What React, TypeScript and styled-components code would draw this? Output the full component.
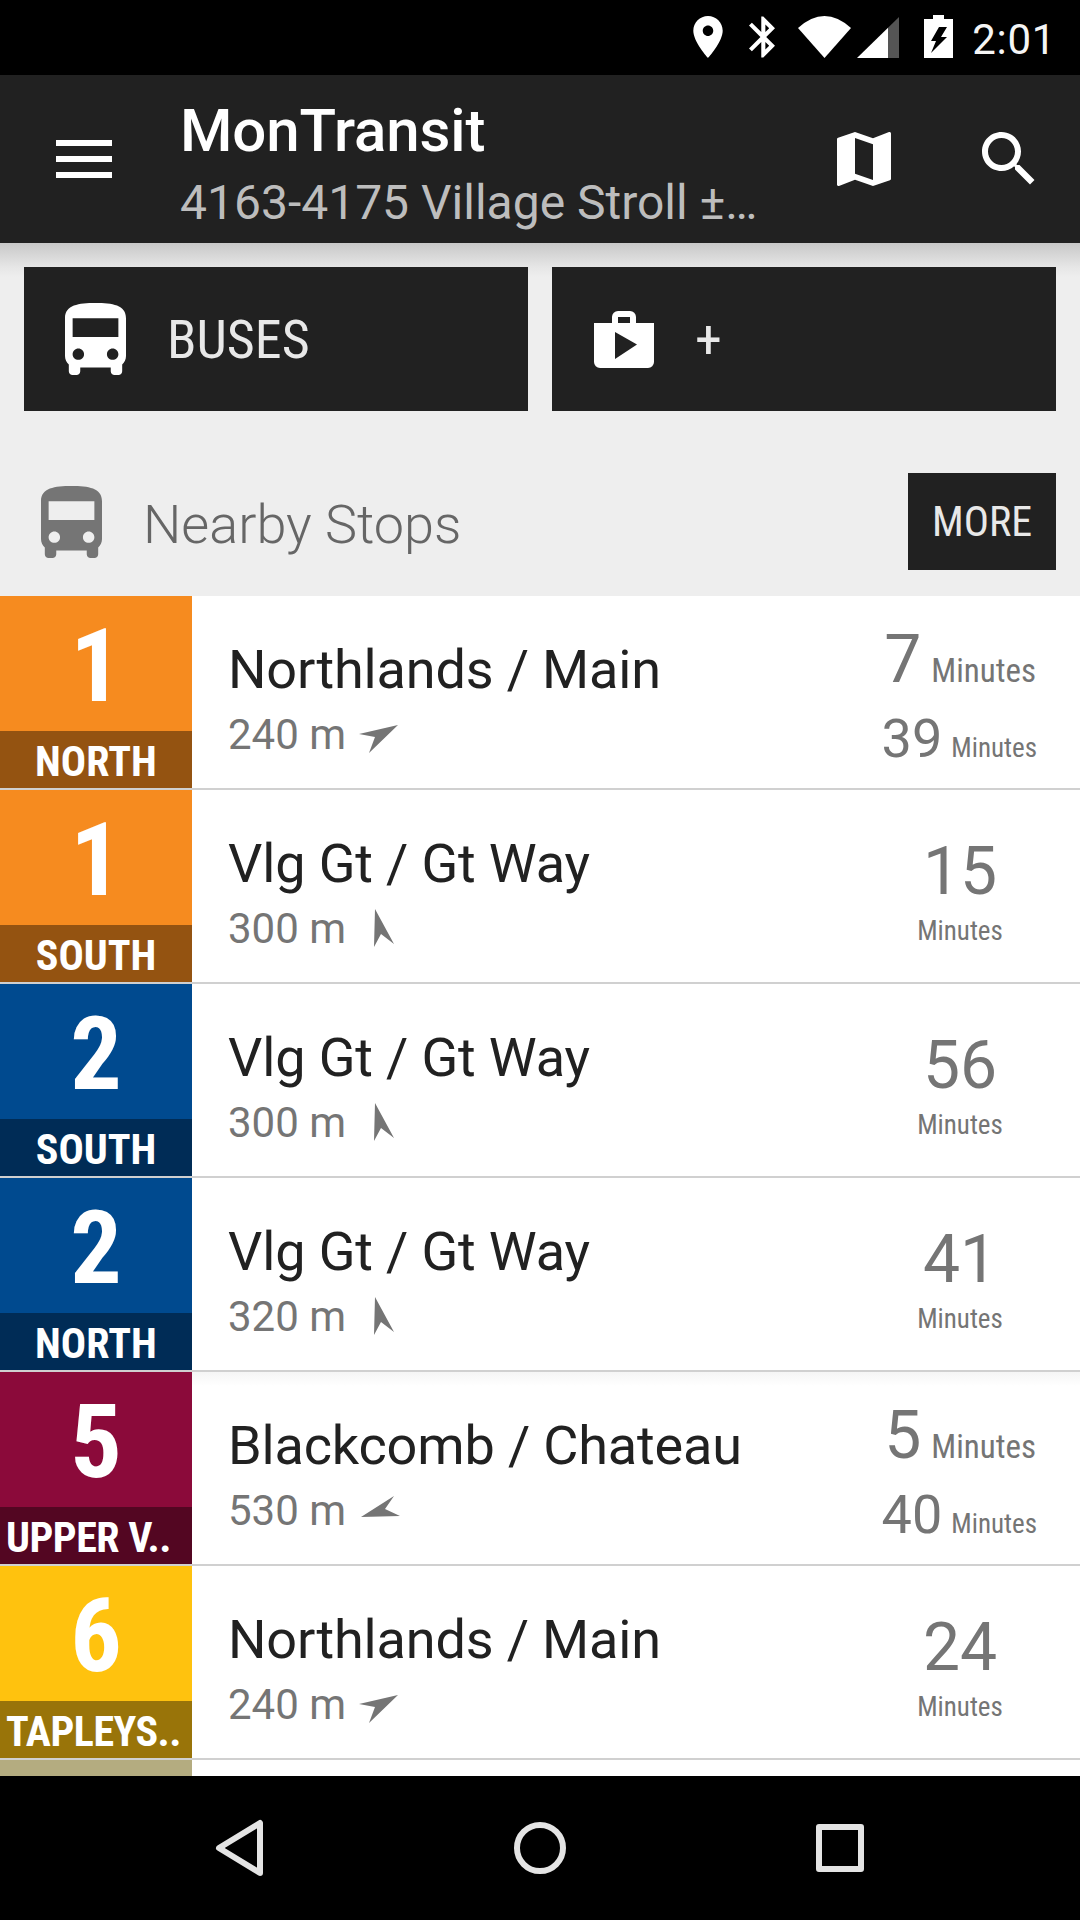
import React from 'react';
import styled, { createGlobalStyle } from 'styled-components';

const GlobalStyle = createGlobalStyle`
  html, body { margin: 0; padding: 0; background: #000; }
  * { box-sizing: border-box; }
`;

const Screen = styled.div`
  width: 1080px;
  height: 1920px;
  display: flex;
  flex-direction: column;
  overflow: hidden;
  font-family: Roboto, "Liberation Sans", sans-serif;
  background: #eee;
`;

const StatusBar = styled.div`
  height: 75px;
  flex: none;
  background: #000;
  display: flex;
  align-items: flex-start;
  justify-content: flex-end;
  padding: 15px 24px 0 0;
`;

const StatusGlyph = styled.svg<{ $ml: number; $top?: number }>`
  display: block;
  flex: none;
  margin-left: ${p => p.$ml}px;
  margin-top: ${p => p.$top || 0}px;
  fill: #fff;
`;

const Clock = styled.div`
  margin-left: 19px;
  margin-top: 2px;
  font-size: 42px;
  line-height: 46px;
  letter-spacing: 0.7px;
  color: #f5f5f5;
`;

const ActionBar = styled.div`
  height: 168px;
  flex: none;
  background: #212121;
  display: flex;
  align-items: center;
`;

const MenuButton = styled.div`
  width: 56px;
  margin-left: 56px;
  display: flex;
  flex-direction: column;
  gap: 10px;
  flex: none;
`;

const MenuLine = styled.span`
  display: block;
  height: 6px;
  background: #fff;
`;

const Titles = styled.div`
  margin-left: 68px;
  flex: 1;
  min-width: 0;
  margin-top: 10px;
`;

const AppTitle = styled.div`
  font-size: 60px;
  line-height: 72px;
  font-weight: 500;
  letter-spacing: -0.1px;
  color: #fff;
`;

const AppSubtitle = styled.div`
  margin-top: 6px;
  font-size: 48px;
  line-height: 60px;
  color: #bdbdbd;
  white-space: nowrap;
`;

const ActionIcon = styled.svg<{ $mr: number }>`
  display: block;
  flex: none;
  width: 72px;
  height: 72px;
  margin-right: ${p => p.$mr}px;
  fill: #fff;
`;

const Content = styled.div`
  flex: 1;
  min-height: 0;
  overflow: hidden;
  background: linear-gradient(#c8c8c8, #e6e6e6 24px, #eee 34px) no-repeat;
  background-size: 100% 40px;
`;

const ButtonRow = styled.div`
  display: flex;
  gap: 24px;
  padding: 24px 24px 0;
`;

const ModuleButton = styled.div`
  flex: 1;
  height: 144px;
  background: #212121;
  display: flex;
  align-items: center;
  padding-left: 23px;
`;

const IconSlot = styled.div`
  width: 96px;
  height: 96px;
  flex: none;
  display: flex;
  align-items: center;
  justify-content: center;
`;

const BagIcon = styled.svg`
  display: block;
  width: 60px;
  height: 57px;
  margin-left: 2px;
  fill: #fff;
`;

const ModuleLabel = styled.div`
  margin-left: 24px;
  font-size: 54px;
  font-weight: 400;
  font-stretch: 75%;
  color: #e8e8e8;
`;

const SectionHeader = styled.div`
  display: flex;
  align-items: center;
  margin: 62px 24px 26px 23px;
  height: 97px;
`;

const SectionTitle = styled.div`
  flex: 1;
  margin-left: 24px;
  padding-top: 5px;
  font-size: 54px;
  font-weight: 300;
  color: #666;
`;

const MoreButton = styled.div`
  width: 148px;
  height: 97px;
  background: #212121;
  color: #e8e8e8;
  font-size: 42px;
  font-weight: 400;
  font-stretch: 75%;
  display: flex;
  align-items: center;
  justify-content: center;
`;

const Row = styled.div<{ $shade?: boolean }>`
  height: 194px;
  display: flex;
  background: ${p => (p.$shade ? 'linear-gradient(#f5f5f5, #fff 14px)' : '#fff')};
  border-bottom: 2px solid #d0d0d0;
`;

const Badge = styled.div<{ $color: string }>`
  width: 192px;
  flex: none;
  display: flex;
  flex-direction: column;
  background: ${p => p.$color};
  color: #fff;
`;

const BadgeNumber = styled.div`
  height: 135px;
  padding-top: 4px;
  display: flex;
  align-items: center;
  justify-content: center;
  font-size: 102px;
  font-weight: 700;
  font-stretch: 75%;
`;

const BadgeLabel = styled.div<{ $color: string; $long: boolean }>`
  height: 57px;
  padding-top: 4px;
  padding-left: ${p => (p.$long ? '6px' : '0')};
  background: ${p => p.$color};
  display: flex;
  align-items: center;
  justify-content: ${p => (p.$long ? 'flex-start' : 'center')};
  font-size: 42px;
  font-weight: 700;
  font-stretch: 75%;
  letter-spacing: ${p => (p.$long ? '-0.5px' : '0')};
  white-space: nowrap;
  overflow: hidden;
`;

const StopInfo = styled.div`
  flex: 1;
  min-width: 0;
  padding: 44px 0 0 36px;
`;

const StopName = styled.div`
  font-size: 54px;
  line-height: 60px;
  letter-spacing: -0.15px;
  color: #212121;
  white-space: nowrap;
`;

const StopDistance = styled.div`
  display: flex;
  align-items: center;
  height: 60px;
  margin-top: 4px;
  font-size: 42px;
  color: #757575;
`;

const Bearing = styled.svg`
  display: block;
  flex: none;
  width: 50px;
  height: 50px;
  margin-left: 8px;
  fill: #757575;
`;

const TimeSingle = styled.div`
  width: 192px;
  margin-right: 24px;
  flex: none;
  display: flex;
  flex-direction: column;
  align-items: center;
  padding-top: 41px;
  color: #757575;
`;

const TimeDouble = styled.div`
  flex: none;
  display: flex;
  flex-direction: column;
  align-items: flex-end;
  padding: 24px 44px 0 0;
  color: #757575;
`;

const BigNumber = styled.div`
  font-size: 66px;
  line-height: 82px;
`;

const SmallNumber = styled.span`
  font-size: 54px;
`;

const TimeLine = styled.div`
  display: flex;
  align-items: baseline;
  gap: 10px;
  font-size: 66px;
  line-height: 79px;
`;

const SecondTimeLine = styled(TimeLine)`
  gap: 9px;
  margin-right: -1px;
`;

const Unit = styled.span<{ $size: number }>`
  font-size: ${p => p.$size}px;
  font-stretch: 75%;
  line-height: 36px;
`;

const NavBar = styled.div`
  height: 144px;
  flex: none;
  background: #000;
  display: flex;
  align-items: center;
  justify-content: center;
  gap: 228px;
`;

const NavIcon = styled.svg`
  display: block;
  width: 72px;
  height: 72px;
  fill: none;
  stroke: #e4e4e4;
  stroke-width: 6;
  stroke-linejoin: round;
`;

const BUS_PATH =
  'M4 16c0 .88.39 1.67 1 2.22V20c0 .55.45 1 1 1h1c.55 0 1-.45 1-1v-1h8v1c0 .55.45 1 1 1h1c.55 0 1-.45 1-1v-1.78c.61-.55 1-1.34 1-2.22V6c0-3.5-3.58-4-8-4s-8 .5-8 4v10zm3.5 1c-.83 0-1.5-.67-1.5-1.5S6.67 14 7.5 14s1.5.67 1.5 1.5S8.33 17 7.5 17zm9 0c-.83 0-1.5-.67-1.5-1.5s.67-1.5 1.5-1.5 1.5.67 1.5 1.5-.67 1.5-1.5 1.5zm1.5-6H6V6h12v5z';

const BusIcon = ({ color }: { color: string }) => (
  <svg width="61" height="72" viewBox="4 2 16 19" fill={color} preserveAspectRatio="none">
    <path d={BUS_PATH} />
  </svg>
);

const BEARINGS: Record<string, string> = {
  ne: '5,25 44,16 15,44 21,28',
  n: '21,6 40,41 27,31 20,44',
  wnw: '7,32 40,11 31,24 46,31',
};

interface Stop {
  route: string;
  label: string;
  color: string;
  dark: string;
  name: string;
  distance: string;
  bearing: string;
  times: string[];
  shade?: boolean;
}

const stops: Stop[] = [
  { route: '1', label: 'NORTH', color: '#f68b1f', dark: '#945311', name: 'Northlands / Main', distance: '240 m', bearing: 'ne', times: ['7', '39'] },
  { route: '1', label: 'SOUTH', color: '#f68b1f', dark: '#945311', name: 'Vlg Gt / Gt Way', distance: '300 m', bearing: 'n', times: ['15'] },
  { route: '2', label: 'SOUTH', color: '#004a8f', dark: '#002c56', name: 'Vlg Gt / Gt Way', distance: '300 m', bearing: 'n', times: ['56'] },
  { route: '2', label: 'NORTH', color: '#004a8f', dark: '#002c56', name: 'Vlg Gt / Gt Way', distance: '320 m', bearing: 'n', times: ['41'] },
  { route: '5', label: 'UPPER V..', color: '#8b0a3a', dark: '#530622', name: 'Blackcomb / Chateau', distance: '530 m', bearing: 'wnw', times: ['5', '40'], shade: true },
  { route: '6', label: 'TAPLEYS..', color: '#ffc20e', dark: '#997409', name: 'Northlands / Main', distance: '240 m', bearing: 'ne', times: ['24'] },
];

const StopRow = ({ stop }: { stop: Stop }) => (
  <Row $shade={stop.shade}>
    <Badge $color={stop.color}>
      <BadgeNumber>{stop.route}</BadgeNumber>
      <BadgeLabel $color={stop.dark} $long={stop.label.length > 6}>{stop.label}</BadgeLabel>
    </Badge>
    <StopInfo>
      <StopName>{stop.name}</StopName>
      <StopDistance>
        {stop.distance}
        <Bearing viewBox="0 0 50 50">
          <polygon points={BEARINGS[stop.bearing]} />
        </Bearing>
      </StopDistance>
    </StopInfo>
    {stop.times.length === 1 ? (
      <TimeSingle>
        <BigNumber>{stop.times[0]}</BigNumber>
        <Unit $size={27}>Minutes</Unit>
      </TimeSingle>
    ) : (
      <TimeDouble>
        <TimeLine>
          {stop.times[0]} <Unit $size={33}>Minutes</Unit>
        </TimeLine>
        <SecondTimeLine>
          <SmallNumber>{stop.times[1]}</SmallNumber> <Unit $size={27}>Minutes</Unit>
        </SecondTimeLine>
      </TimeDouble>
    )}
  </Row>
);

export default function App() {
  return (
    <Screen>
      <GlobalStyle />
      <StatusBar>
        <StatusGlyph $ml={0} $top={1} width="30" height="42" viewBox="5 2 14 20">
          <path d="M12 2C8.13 2 5 5.13 5 9c0 5.25 7 13 7 13s7-7.75 7-13c0-3.87-3.13-7-7-7zm0 9.5c-1.38 0-2.5-1.12-2.5-2.5s1.12-2.5 2.5-2.5 2.5 1.12 2.5 2.5-1.12 2.5-2.5 2.5z" />
        </StatusGlyph>
        <StatusGlyph $ml={26} $top={1} width="26" height="42" viewBox="5 2 12.71 20">
          <path d="M17.71 7.71L12 2h-1v7.59L6.41 5 5 6.41 10.59 12 5 17.59 6.41 19 11 14.41V22h1l5.71-5.71-4.3-4.29 4.3-4.29zM13 5.83l1.88 1.88L13 9.59V5.83zm1.88 10.46L13 18.17v-3.76l1.88 1.88z" />
        </StatusGlyph>
        <StatusGlyph $ml={23} $top={1} width="53" height="42" viewBox="0 0 53 42">
          <path d="M26.5 42L0 12Q26.5 -12 53 12Z" />
        </StatusGlyph>
        <StatusGlyph $ml={6} $top={2} width="42" height="41" viewBox="0 0 42 41">
          <path d="M0 41L31 41L31 10.7Z" />
          <path d="M31 41L42 41L42 0L31 10.7Z" fill="#555" />
        </StatusGlyph>
        <StatusGlyph $ml={25} width="29" height="43" viewBox="0 0 29 43">
          <path
            fillRule="evenodd"
            d="M9 0H20V4H29V43H0V4H9ZM15 12L7 26H12L7 38L23 22H17L23 12Z"
          />
        </StatusGlyph>
        <Clock>2:01</Clock>
      </StatusBar>
      <ActionBar>
        <MenuButton>
          <MenuLine />
          <MenuLine />
          <MenuLine />
        </MenuButton>
        <Titles>
          <AppTitle>MonTransit</AppTitle>
          <AppSubtitle>4163-4175 Village Stroll ±…</AppSubtitle>
        </Titles>
        <ActionIcon $mr={73} viewBox="0 0 24 24">
          <path d="M20.5 3l-.16.03L15 5.1 9 3 3.36 4.9c-.21.07-.36.25-.36.48V20.5c0 .28.22.5.5.5l.16-.03L9 18.9l6 2.1 5.64-1.9c.21-.07.36-.25.36-.48V3.5c0-.28-.22-.5-.5-.5zM15 19l-6-2.11V5l6 2.11V19z" />
        </ActionIcon>
        <ActionIcon $mr={35} viewBox="0 0 24 24">
          <path d="M15.5 14h-.79l-.28-.27C15.41 12.59 16 11.11 16 9.5 16 5.91 13.09 3 9.5 3S3 5.91 3 9.5 5.91 16 9.5 16c1.61 0 3.09-.59 4.23-1.57l.27.28v.79l5 4.99L20.49 19l-4.99-5zm-6 0C7.01 14 5 11.99 5 9.5S7.01 5 9.5 5 14 7.01 14 9.5 11.99 14 9.5 14z" />
        </ActionIcon>
      </ActionBar>
      <Content>
        <ButtonRow>
          <ModuleButton>
            <IconSlot>
              <BusIcon color="#fff" />
            </IconSlot>
            <ModuleLabel>BUSES</ModuleLabel>
          </ModuleButton>
          <ModuleButton>
            <IconSlot>
              <BagIcon viewBox="0 0 60 57">
                <path
                  fillRule="evenodd"
                  d="M18 12V6a6 6 0 0 1 6-6H36a6 6 0 0 1 6 6V12H60V51a6 6 0 0 1-6 6H6a6 6 0 0 1-6-6V12ZM24 6V12H36V6ZM21 21V48L43 33.5Z"
                />
              </BagIcon>
            </IconSlot>
            <ModuleLabel>+</ModuleLabel>
          </ModuleButton>
        </ButtonRow>
        <SectionHeader>
          <IconSlot>
            <BusIcon color="#757575" />
          </IconSlot>
          <SectionTitle>Nearby Stops</SectionTitle>
          <MoreButton>MORE</MoreButton>
        </SectionHeader>
        {stops.map((stop, i) => (
          <StopRow key={i} stop={stop} />
        ))}
        <Row>
          <Badge $color="#b4ac80" />
        </Row>
      </Content>
      <NavBar>
        <NavIcon viewBox="0 0 72 72">
          <path d="M56 11V61L15 36Z" />
        </NavIcon>
        <NavIcon viewBox="0 0 72 72">
          <circle cx="36" cy="36" r="23" />
        </NavIcon>
        <NavIcon viewBox="0 0 72 72">
          <rect x="15" y="15" width="42" height="42" />
        </NavIcon>
      </NavBar>
    </Screen>
  );
}
